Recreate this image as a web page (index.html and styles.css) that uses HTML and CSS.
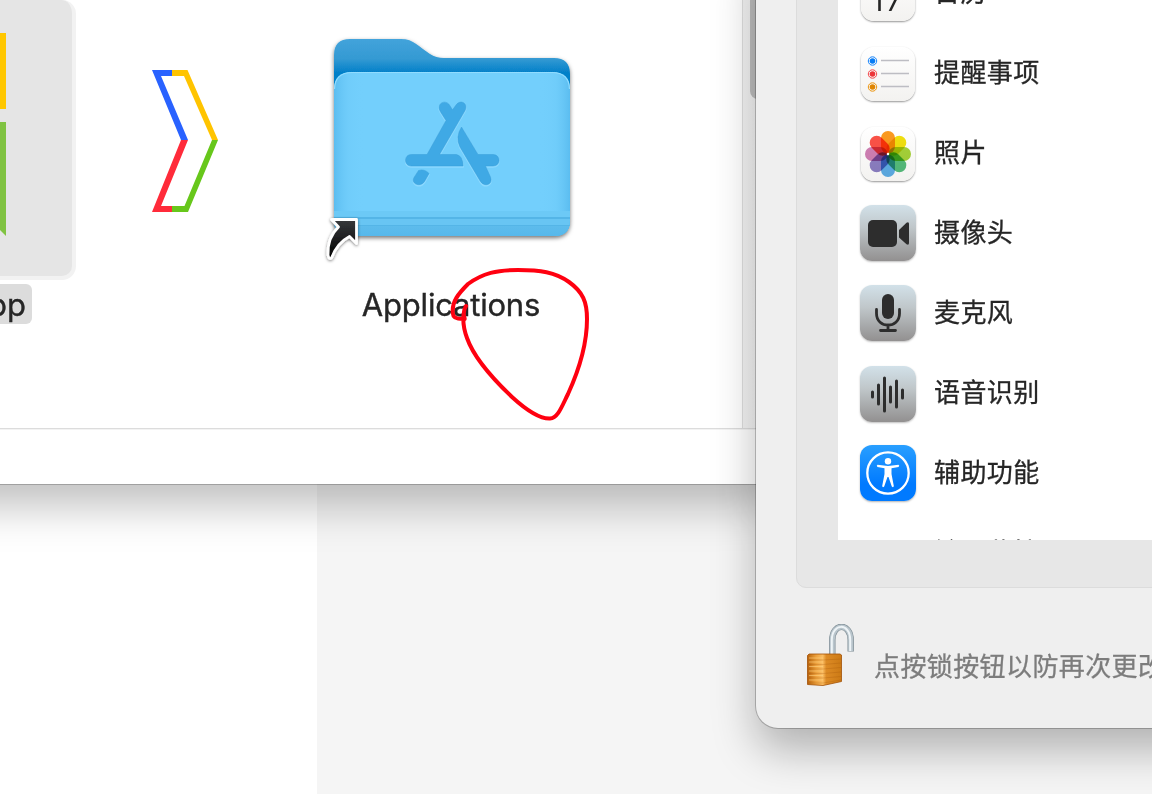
FILE: index.html
```html
<!DOCTYPE html>
<html lang="zh-CN">
<head>
<meta charset="utf-8">
<title>Applications</title>
<link rel="stylesheet" href="styles.css">
</head>
<body>
<main class="desktop">
  <section class="finder">
    <div class="finder-body">
      <div class="canvas">
        <div class="app-item">
          <div class="app-icon">
            <svg class="app-art" width="66" height="203" viewBox="0 0 66 203"><path fill="#ffc700" d="M0 0h66v76H0z"/><path fill="#80c342" d="M0 89h66v114L0 137z"/></svg>
          </div>
          <div class="app-label">App</div>
        </div>
        <svg class="chevron" width="68" height="144" viewBox="0 0 68 144">
          <path fill="#2962ff" d="M1 1H21V7H10L37 71H30Z"/>
          <path fill="#ffc400" d="M21 1H36.500L67 71H61L33 7H21Z"/>
          <path fill="#ff2b3a" d="M30 71H37L10 137H21V143H1Z"/>
          <path fill="#67c71b" d="M61 71H67L37 143H21V137H33.500Z"/>
        </svg>
        <div class="folder-item">
          <svg class="folder" width="270" height="244" viewBox="322 28 270 244">
            <defs>
              <linearGradient id="back" x1="0" y1="0" x2="0" y2="1"><stop offset="0" stop-color="#43a3db"/><stop offset=".1" stop-color="#349ad3"/><stop offset=".17" stop-color="#0380c9"/><stop offset="1" stop-color="#0380c9"/></linearGradient>
              <linearGradient id="edge"><stop offset="0" stop-color="#47aee6" stop-opacity=".55"/><stop offset=".06" stop-color="#5dbef0" stop-opacity=".15"/><stop offset=".13" stop-color="#73cffc" stop-opacity="0"/><stop offset=".87" stop-color="#73cffc" stop-opacity="0"/><stop offset=".94" stop-color="#5dbef0" stop-opacity=".15"/><stop offset="1" stop-color="#47aee6" stop-opacity=".55"/></linearGradient>
              <linearGradient id="foot" x1="0" y1="0" x2="0" y2="1"><stop offset="0" stop-color="#5ebcec"/><stop offset="1" stop-color="#56b8eb"/></linearGradient>
              <linearGradient id="ink" x1="0" y1="0" x2="0" y2="1"><stop offset="0" stop-color="#38393c"/><stop offset="1" stop-color="#000"/></linearGradient>
              <clipPath id="front"><path d="M334 90Q334 72 352 72H552Q570 72 570 90V220Q570 236 554 236H350Q334 236 334 220Z"/></clipPath>
              <filter id="fshadow" x="-10%" y="-10%" width="120%" height="125%"><feDropShadow dx="0" dy="2" stdDeviation="2" flood-opacity=".55"/></filter>
              <filter id="ashadow" x="-30%" y="-30%" width="160%" height="160%"><feDropShadow dx="0" dy="1" stdDeviation="1.500" flood-opacity=".5"/></filter>
            </defs>
            <path filter="url(#fshadow)" fill="url(#back)" d="M334 55Q334 39 350 39H401C414 39 419 47 430 54Q436 58 444 58H554Q570 58 570 74V220Q570 236 554 236H350Q334 236 334 220Z"/>
            <g clip-path="url(#front)">
              <path fill="#73cffc" d="M334 72h236v164H334z"/>
              <path fill="url(#edge)" d="M334 72h236v164H334z"/>
              <path fill="#6cc9f6" d="M334 211h236v6H334z"/>
              <path fill="#54b5e7" d="M334 217h236v2H334z"/>
              <path fill="#68c5f3" d="M334 219h236v6H334z"/>
              <path fill="url(#foot)" d="M334 225h236v11H334z"/>
              <path fill="#54b5e7" d="M334 225h236v1H334z"/>
            </g>
            <path fill="none" stroke="#91dcff" stroke-width="1.200" d="M334.500 89Q335 72.500 352 72.500H552Q569 72.500 569.500 89"/>
            <g class="emblem-glow">
              <path d="M446 120.500L440.300 111.500C436 103 445.500 99 449.500 105L452.500 109.800L456 105C461 98.500 468.500 104 465 110.500L439.500 154.500H456.500Q463 156 463 166H411.500C403.500 166 403.500 154.500 411.500 154.500H427Z"/>
              <path d="M461.500 127L478 154.500H493C501 154.500 501 166 493 166H485.500L490.500 177C493.500 184.500 484.500 187.500 480.500 181.500L460 147Q455 137 461.500 127Z"/>
              <path d="M418.500 170.500Q424.500 168.500 429 173.500L424.500 181.500C420 188 410.500 183.500 414 177.500Z"/>
            </g>
            <g class="emblem">
              <path d="M446 120.500L440.300 111.500C436 103 445.500 99 449.500 105L452.500 109.800L456 105C461 98.500 468.500 104 465 110.500L439.500 154.500H456.500Q463 156 463 166H411.500C403.500 166 403.500 154.500 411.500 154.500H427Z"/>
              <path d="M461.500 127L478 154.500H493C501 154.500 501 166 493 166H485.500L490.500 177C493.500 184.500 484.500 187.500 480.500 181.500L460 147Q455 137 461.500 127Z"/>
              <path d="M418.500 170.500Q424.500 168.500 429 173.500L424.500 181.500C420 188 410.500 183.500 414 177.500Z"/>
            </g>
            <path filter="url(#ashadow)" fill="url(#ink)" stroke="#fff" stroke-width="2.800" stroke-linejoin="round" d="M331.500 219.500H356.500V243.500L349.500 236.500Q337 243 331.500 258Q329 260 328 255C327.500 243 331 234 338.500 227Z"/>
          </svg>
          <div class="folder-label">Applications</div>
        </div>
      </div>
      <div class="scroll-track"><div class="scroll-thumb"></div></div>
    </div>
    <footer class="finder-status"></footer>
  </section>

  <section class="settings">
    <div class="panel">
      <ul class="list">
        <li class="row">
          <div class="icon light calendar">17</div><span>日历</span>
        </li>
        <li class="row">
          <div class="icon light">
            <svg width="54" height="54" viewBox="0 0 54 54"><g fill="none" stroke-width="1"><circle cx="11.500" cy="14" r="4.200" stroke="#1684fb"/><circle cx="11.500" cy="27" r="4.200" stroke="#f44649"/><circle cx="11.500" cy="40" r="4.200" stroke="#ed950e"/></g><circle cx="11.500" cy="14" r="2.800" fill="#087cf5"/><circle cx="11.500" cy="27" r="2.800" fill="#ec3539"/><circle cx="11.500" cy="40" r="2.800" fill="#df8500"/><path stroke="#bdbdc3" stroke-width="1.600" d="M20 13.500h28M20 26.500h28M20 39.500h28"/></svg>
          </div><span>提醒事项</span>
        </li>
        <li class="row">
          <div class="icon light">
            <svg width="54" height="54" viewBox="0 0 54 54"><g class="petals">
              <rect x="20" y="4" width="14" height="22.500" rx="7" fill="#fb9a20"/>
              <rect x="20" y="4" width="14" height="22.500" rx="7" fill="#f1e00f" transform="rotate(45 27 27)"/>
              <rect x="20" y="4" width="14" height="22.500" rx="7" fill="#a5d238" transform="rotate(90 27 27)"/>
              <rect x="20" y="4" width="14" height="22.500" rx="7" fill="#55bd7c" transform="rotate(135 27 27)"/>
              <rect x="20" y="4" width="14" height="22.500" rx="7" fill="#5eaee8" transform="rotate(180 27 27)"/>
              <rect x="20" y="4" width="14" height="22.500" rx="7" fill="#8c7fc4" transform="rotate(225 27 27)"/>
              <rect x="20" y="4" width="14" height="22.500" rx="7" fill="#d07fb5" transform="rotate(270 27 27)"/>
              <rect x="20" y="4" width="14" height="22.500" rx="7" fill="#fb5247" transform="rotate(315 27 27)"/>
            </g><circle cx="27" cy="27" r="1.200" fill="#fff"/></svg>
          </div><span>照片</span>
        </li>
        <li class="row">
          <div class="icon metal">
            <svg width="56" height="56" viewBox="0 0 56 56" fill="#2d2d2d"><rect x="8" y="15" width="29" height="27" rx="5"/><path d="M39 25L46.500 17.800Q49 16.500 49 19V38Q49 40.500 46.500 39.200L39 32.500Z"/></svg>
          </div><span>摄像头</span>
        </li>
        <li class="row">
          <div class="icon metal">
            <svg width="56" height="56" viewBox="0 0 56 56"><rect x="22" y="9" width="12" height="25" rx="6" fill="#2d2d2d"/><path fill="none" stroke="#2d2d2d" stroke-width="2.800" stroke-linecap="round" d="M16.500 24.500V28.500C16.500 44 39.500 44 39.500 28.500V24.500M28 40V45.500M20.500 45.500H35.500"/></svg>
          </div><span>麦克风</span>
        </li>
        <li class="row">
          <div class="icon metal speech">
            <svg width="56" height="56" viewBox="0 0 56 56"><path fill="none" stroke="#2d2d2d" stroke-width="3" stroke-linecap="round" d="M12.500 26V31M18.500 19V38M24.500 12V45M30.500 21V36M36.500 15V41M42.500 24V32"/></svg>
          </div><span>语音识别</span>
        </li>
        <li class="row">
          <div class="icon blue">
            <svg width="56" height="56" viewBox="0 0 56 56"><circle cx="28" cy="28" r="20.700" fill="none" stroke="#fff" stroke-width="2.300"/><circle cx="28" cy="16.300" r="3.200" fill="#fff"/><path fill="#fff" d="M17.500 19.700L28 21L38.500 19.700Q40 20.500 38.500 22L31.500 23.200V29L33.800 41Q33.500 43 31.800 41.500L28.500 32H27.500L24.200 41.500Q22.500 43 22.200 41L24.500 29V23.200L17.500 22Q16 20.500 17.500 19.700Z"/></svg>
          </div><span>辅助功能</span>
        </li>
        <li class="row">
          <div class="icon"></div><span>输入监控</span>
        </li>
      </ul>
    </div>
    <footer class="lock-row">
      <svg class="lock" width="50" height="64" viewBox="0 0 50 64">
        <defs>
          <linearGradient id="brass"><stop offset="0" stop-color="#b9630c"/><stop offset=".25" stop-color="#eca03c"/><stop offset=".45" stop-color="#fbbd62"/><stop offset=".55" stop-color="#dd8b25"/><stop offset="1" stop-color="#cc7a15"/></linearGradient>
        </defs>
        <path class="shackle-edge" d="M27.300 34V16C27.300-1.500 45.700-1.500 45.700 16V27.500"/>
        <path class="shackle" d="M27.300 34V16C27.300-1.500 45.700-1.500 45.700 16V27"/>
        <path class="shackle-shine" d="M26.800 33V16C26.800-1 45.200-2 45.200 16V27"/>
        <path fill="url(#brass)" stroke="#a25106" stroke-width=".8" d="M2.500 31.500L4 30H35L36.500 31V57.500L18 61.500L2.500 60.500Z"/>
        <path stroke="#ffd27e" stroke-opacity=".6" d="M4 34H18M4 38H18M4 42.500H18M4 47H18M4 51.500H18M4 56H18"/>
        <path fill="none" stroke="#944805" stroke-opacity=".22" d="M3 36H18L36 35M3 40.500H18L36 39M3 45H18L36 43.500M3 49.500H18L36 48M3 54H18L36 52.500M3 59H18L36 56"/>
      </svg>
      <span>点按锁按钮以防再次更改。</span>
    </footer>
  </section>

  <svg class="mark" width="150" height="164" viewBox="446 262 150 164"><path d="M466 306C460 316 468 320 463 319C457 319 453 318 453 314C451 302 459 293 468 284C483 273 497 270 518 270C540 270 555 272 569 282C583 292 587 302 587 319C587 344 579 370 568 394C562 406 558 418 550 418.500C539 419 524 408 512 397C493 379 474 358 467 338C463 327 463 317 464 312"/></svg>
</main>
</body>
</html>
```
FILE: styles.css
```css
* { box-sizing: border-box; }
body { margin: 0; font-family: Inter, "Noto Sans CJK SC", sans-serif; color: #262626; }
svg { display: block; flex: none; }

.desktop {
  position: relative;
  width: 1152px;
  height: 794px;
  overflow: hidden;
  background: linear-gradient(90deg, #fff 317px, #f5f5f5 317px);
}

/* Finder window */
.finder {
  position: absolute;
  left: -60px;
  top: -60px;
  width: 838px;
  height: 544px;
  padding-top: 60px;
  display: flex;
  flex-direction: column;
  background: #fff;
  border-radius: 20px;
  box-shadow: 0 0 0 1px rgba(0, 0, 0, .2), 0 22px 44px rgba(0, 0, 0, .25);
}
.finder-body { flex: 1; display: flex; min-height: 0; border-bottom: 1px solid #dcdcdc; }
.finder-status { height: 55px; border-top: 1px solid #f3f3f3; }
.canvas { width: 802px; display: flex; align-items: flex-start; }
.app-item { width: 136px; display: flex; flex-direction: column; align-items: flex-start; }
.app-icon {
  width: 136px;
  height: 280px;
  padding-top: 33px;
  background: #e5e5e5;
  border: 4px solid #f2f2f2;
  border-top: 0;
  border-left: 0;
  border-radius: 0 14px 14px 0;
}
.app-label {
  width: 92px;
  height: 40px;
  margin-top: 4px;
  padding-right: 6px;
  border-radius: 6px;
  background: #dcdcdc;
  font-size: 31px;
  line-height: 42px;
  text-align: right;
  -webkit-text-stroke: .4px #262626;
}
.chevron { margin: 69px 0 0 75px; }
.folder-item { width: 270px; margin: 28px 0 0 103px; }
.folder-label {
  padding-right: 12px;
  margin-top: 13px;
  font-size: 31px;
  line-height: 40px;
  letter-spacing: -.2px;
  text-align: center;
  -webkit-text-stroke: .4px #262626;
}
.emblem-glow { fill: #8cd9ff; stroke: #8cd9ff; stroke-width: 1.5; transform: translateY(1px); }
.emblem { fill: #3fa9e5; stroke: #369dd8; stroke-width: .5; }
.scroll-track {
  flex: 1;
  padding-left: 7px;
  background: linear-gradient(90deg, #f3f3f3, #fafafa);
  border-left: 1px solid #dedede;
}
.scroll-thumb { width: 16px; height: 99px; border-radius: 0 0 8px 8px; background: #bfbfbf; }

/* Settings window */
.settings {
  position: absolute;
  left: 756px;
  top: -60px;
  width: 600px;
  height: 788px;
  padding: 0 0 0 40px;
  background: #efefef;
  border-radius: 22px;
  box-shadow: 0 0 0 1px rgba(0, 0, 0, .22), 0 22px 44px rgba(0, 0, 0, .28);
}
.panel {
  height: 648px;
  padding: 0 0 47px 41px;
  background: #e7e7e7;
  border: 1px solid #dcdcdc;
  border-radius: 10px;
}
.list {
  height: 599px;
  margin: 0;
  padding: 12px 0 0 22px;
  overflow: hidden;
  list-style: none;
  background: #fff;
}
.row {
  height: 80px;
  display: flex;
  align-items: center;
  gap: 18px;
  font-size: 26px;
  letter-spacing: .4px;
  -webkit-text-stroke: .3px #262626;
}
.row span { line-height: 40px; }
.icon { width: 56px; height: 56px; border-radius: 12px; flex: none; }
.light {
  width: 54px;
  height: 54px;
  margin: 2px 1px 0;
  border-radius: 13px;
  background: linear-gradient(#fff, #f3f2f0);
  box-shadow: 0 1px 2px rgba(0, 0, 0, .42);
}
.calendar { padding-top: 9px; font: 300 38px/42px Inter, sans-serif; text-align: center; -webkit-text-stroke: 0; }
.metal { background: linear-gradient(#d2e1e9, #c0c7ca 40%, #929090); box-shadow: 0 1px 2px rgba(0, 0, 0, .25); }
.speech { margin-top: 2px; }
.blue { background: linear-gradient(#299fff, #007aff 70%); box-shadow: 0 1px 2px rgba(0, 0, 0, .3); }
.petals rect { mix-blend-mode: multiply; }
.lock-row {
  display: flex;
  padding: 36px 0 0 9px;
  gap: 19px;
  white-space: nowrap;
  font-size: 26px;
  letter-spacing: .4px;
  color: #7c7c7c;
  -webkit-text-stroke: .3px #7c7c7c;
}
.lock-row span { padding-top: 23px; line-height: 40px; }
.shackle-edge { fill: none; stroke: #7f8d95; stroke-width: 6.4; }
.shackle { fill: none; stroke: #b9c5cc; stroke-width: 5; }
.shackle-shine { fill: none; stroke: #eef4f7; stroke-width: 2; }

/* Hand-drawn annotation */
.mark { position: absolute; left: 446px; top: 262px; }
.mark path { fill: none; stroke: #ff0010; stroke-width: 4; stroke-linecap: round; stroke-linejoin: round; }
```
